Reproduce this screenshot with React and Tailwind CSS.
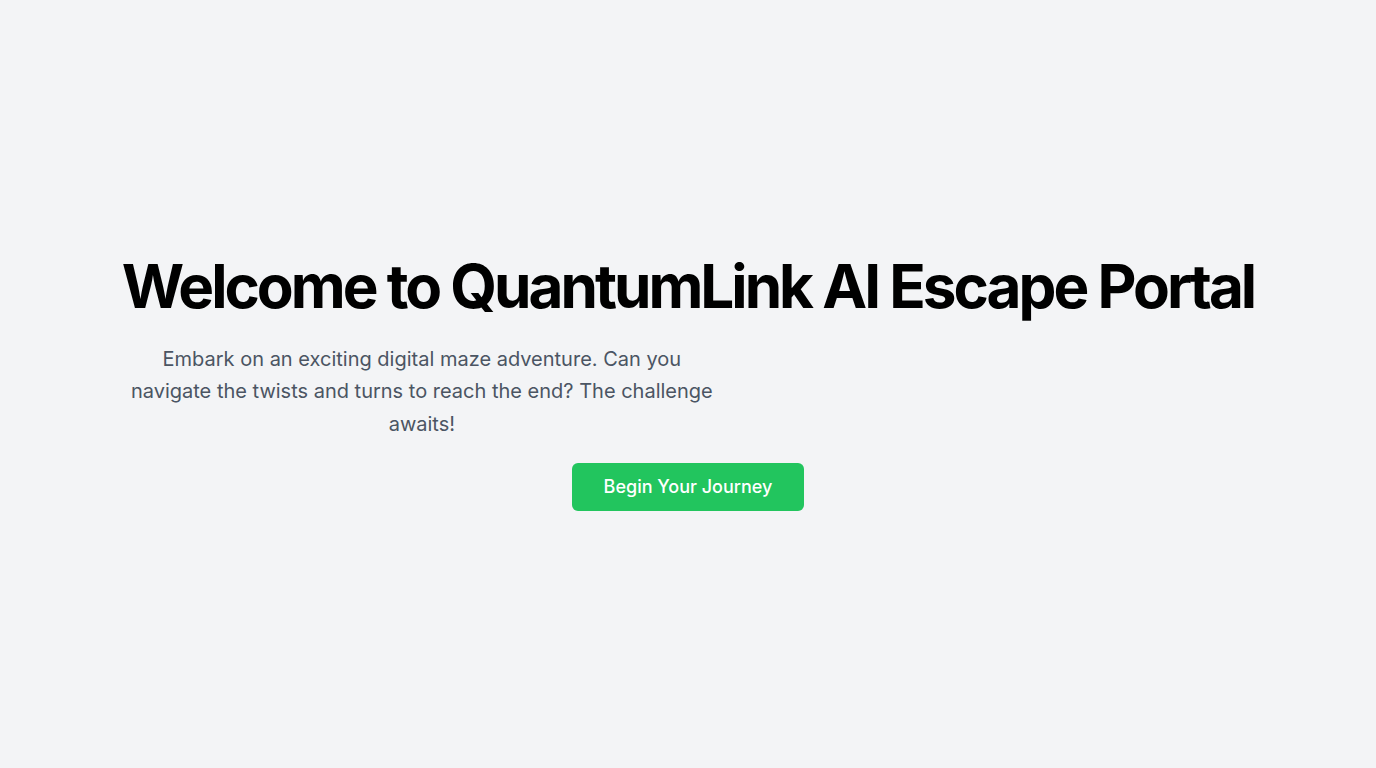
import React from 'react';

const App = () => {
  return (
    <div className="min-h-screen bg-[#f3f4f6] flex items-center justify-center font-['Inter',sans-serif]">
      <div className="flex flex-col">
        <h1 className="text-[60.2px] leading-none font-bold tracking-tighter text-black text-center">
          Welcome to QuantumLink AI Escape Portal
        </h1>
        <p className="mt-[26px] max-w-[600px] text-xl leading-relaxed text-[#4b5563] text-center">
          Embark on an exciting digital maze adventure. Can you navigate the twists and turns to reach the end? The challenge awaits!
        </p>
        <div className="mt-[23px] flex justify-center">
          <button className="bg-[#22c55e] hover:bg-[#16a34a] text-white text-lg font-medium px-8 py-2.5 rounded-md">
            Begin Your Journey
          </button>
        </div>
      </div>
    </div>
  );
};

export default App;
